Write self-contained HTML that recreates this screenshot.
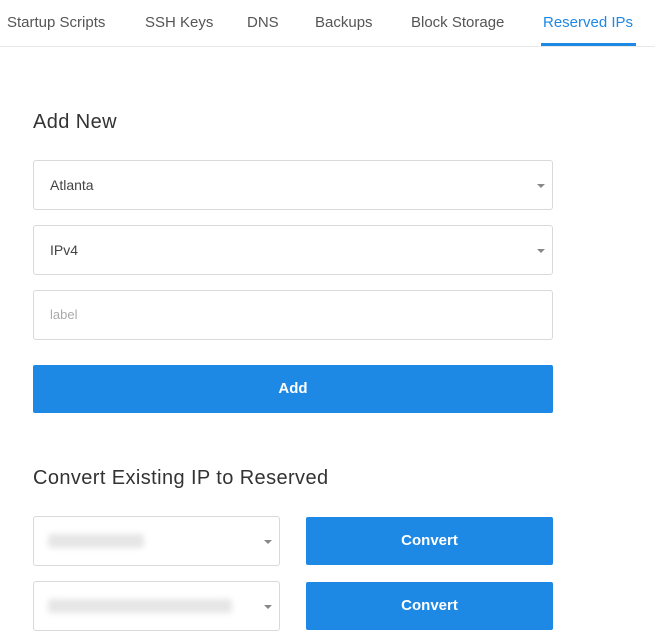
<!DOCTYPE html><html><head><style>
body{margin:0;background:#fff;font-family:"Liberation Sans",sans-serif;width:655px;height:636px;overflow:hidden;position:relative}
.t{position:absolute;top:14px;font-size:15px;color:#555}
.a{color:#1e88e5}
.ul{position:absolute;left:541px;top:43px;width:95px;height:3px;background:#1e88e5}
.line{position:absolute;left:0;top:46px;width:655px;height:1px;background:#e8e8e8}
h2{position:absolute;margin:0;font-weight:normal;font-size:20px;color:#333;letter-spacing:0.4px}
.in{position:absolute;border:1px solid #d9d9d9;border-radius:3px;box-sizing:border-box;background:#fff;font-size:14px;color:#444;padding-left:16px;line-height:48px}
.ar{position:absolute;right:7px;top:23px;width:0;height:0;border-left:4px solid transparent;border-right:4px solid transparent;border-top:4px solid #888}
.b{position:absolute;background:#1e88e5;color:#fff;font-weight:bold;font-size:15px;text-align:center;border-radius:2px}
.blur{position:absolute;top:17px;height:14px;background:#e6e6e6;filter:blur(3px);border-radius:3px}
</style></head><body>
<div class="t" style="left:7px">Startup Scripts</div>
<div class="t" style="left:145px">SSH Keys</div>
<div class="t" style="left:247px">DNS</div>
<div class="t" style="left:315px">Backups</div>
<div class="t" style="left:411px">Block Storage</div>
<div class="t a" style="left:543px">Reserved IPs</div>
<div class="line"></div><div class="ul"></div>
<h2 style="left:33px;top:111px">Add New</h2>
<div class="in" style="left:33px;top:160px;width:520px;height:50px">Atlanta<div class="ar"></div></div>
<div class="in" style="left:33px;top:225px;width:520px;height:50px">IPv4<div class="ar"></div></div>
<div class="in" style="left:33px;top:290px;width:520px;height:50px;color:#aaa;font-size:13px">label</div>
<div class="b" style="left:33px;top:365px;width:520px;height:48px;line-height:48px">Add</div>
<h2 style="left:33px;top:467px">Convert Existing IP to Reserved</h2>
<div class="in" style="left:33px;top:516px;width:247px;height:50px"><div class="blur" style="left:14px;width:96px"></div><div class="ar"></div></div>
<div class="in" style="left:33px;top:581px;width:247px;height:50px"><div class="blur" style="left:14px;width:184px"></div><div class="ar"></div></div>
<div class="b" style="left:306px;top:517px;width:247px;height:48px;line-height:48px">Convert</div>
<div class="b" style="left:306px;top:582px;width:247px;height:48px;line-height:48px">Convert</div>
</body></html>
